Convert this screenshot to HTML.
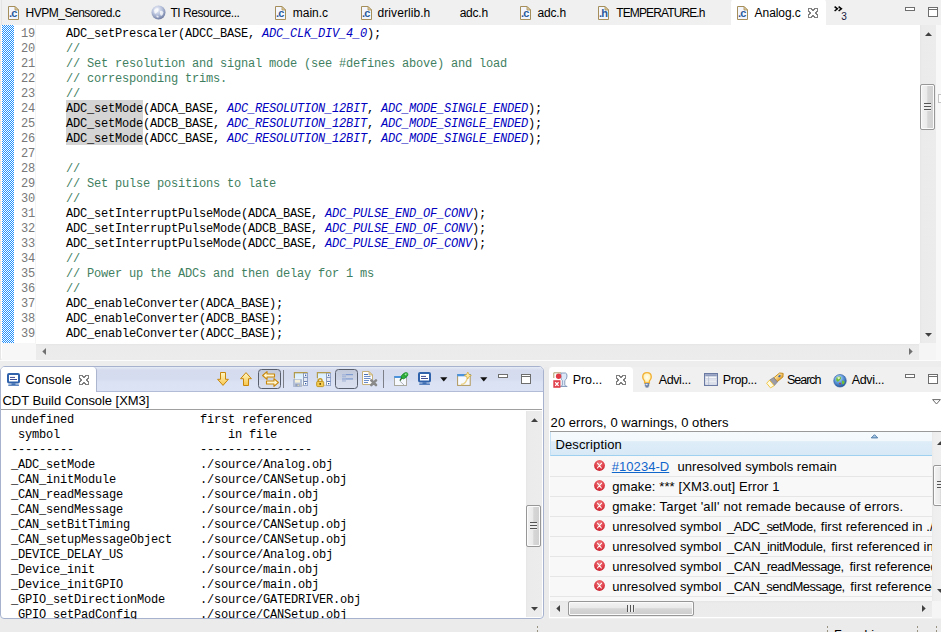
<!DOCTYPE html>
<html><head><meta charset="utf-8"><title>Analog.c</title>
<style>
*{box-sizing:border-box;margin:0;padding:0}
html,body{width:941px;height:632px;overflow:hidden;background:#f0f0f0}
body{position:relative;font-family:"Liberation Sans",sans-serif;font-size:12px;color:#000}
.abs,.ln,.cl,.co,.pr,.lb,.ic{position:absolute}
.ic{overflow:visible}
.lb{line-height:20px;height:20px;white-space:nowrap}
#hatch{position:absolute;left:2px;top:25px;width:12px;height:318px;
 background:repeating-conic-gradient(#fff 0% 25%,#1e90ff 0% 50%) 0 0/2px 2px}
.ln,.cl,.co{font-family:"Liberation Mono",monospace;font-size:12px;letter-spacing:-0.2px;line-height:15px;height:15px;white-space:pre}
.ln{left:21px;color:#787878}
.cl{left:66px}
.c{color:#3f7f5f}
.m{color:#0000c0;font-style:italic}
.h{}
.co{left:4px}
.pr{left:550px;height:20px;width:382px;overflow:hidden;white-space:nowrap;font-size:13px;line-height:20px}
.pr .sg{position:absolute;top:0.50px;line-height:20px;height:20px}
.lk{color:#1166cc;text-decoration:underline;text-underline-offset:1px}
.thumb{position:absolute;border:1px solid #979797;border-radius:2px;box-shadow:inset 0 0 0 1px #fbfbfb;background:linear-gradient(90deg,#f3f3f3,#eaeaea 45%,#d6d6d6 52%,#d0d0d0)}
.thumbh{position:absolute;border:1px solid #979797;border-radius:2px;box-shadow:inset 0 0 0 1px #fbfbfb;background:linear-gradient(#f3f3f3,#eaeaea 45%,#d6d6d6 52%,#cdcdcd)}
.grip{position:absolute;width:7px;height:8px;background:linear-gradient(#555 0,#555 1px,#eee 1px,#eee 3px,#555 3px,#555 4px,#eee 4px,#eee 6px,#555 6px,#555 7px,#eee 7px)}
.griph{position:absolute;width:8px;height:7px;background:linear-gradient(90deg,#555 0,#555 1px,#eee 1px,#eee 3px,#555 3px,#555 4px,#eee 4px,#eee 6px,#555 6px,#555 7px,#eee 7px)}
</style></head><body>
<!-- editor tab strip -->
<div class="abs" style="left:0;top:0;width:941px;height:25px;background:#f0f0f0"></div>
<div class="abs" style="left:1px;top:0;width:1px;height:25px;background:#e4e4e4"></div>
<div class="abs" style="left:731px;top:-1px;width:95px;height:26px;background:#fff;border-radius:4px 4px 0 0"></div>

<!-- editor body -->
<div class="abs" style="left:1px;top:25px;width:935px;height:335px;background:#fff;border-radius:0 0 0 3px"></div>
<div class="abs" style="left:936px;top:25px;width:5px;height:336px;background:#f8f8f8"></div>
<div class="abs" style="left:938px;top:94px;width:4px;height:9px;background:#fff;border:1px solid #c4c4c4"></div>
<div id="hatch"></div>
<div class="abs" style="left:35px;top:25px;width:1px;height:318px;background:#f4f4f4"></div>
<div class="abs" style="left:2px;top:343px;width:34px;height:17px;background:#f7f7f7"></div>
<div class="abs" style="left:0;top:25px;width:1px;height:335px;background:#e6e6e6"></div>
<div class="abs" style="left:36px;top:344px;width:883px;height:16px;background:linear-gradient(#e5e5e5 0,#ebebeb 2px,#ececec 100%)"></div>
<div class="abs" style="left:919px;top:343px;width:17px;height:17px;background:#f5f5f5"></div>
<div class="abs" style="left:920px;top:25px;width:16px;height:318px;background:linear-gradient(90deg,#e6e6e6 0,#ebebeb 2px,#ececec 100%)"></div>
<div class="thumb" style="left:920px;top:84px;width:15px;height:46px"></div>
<div class="grip" style="left:924px;top:103px"></div>
<div class="abs" style="left:0;top:360px;width:941px;height:1px;background:#fcfcfc"></div>
<div class="abs" style="left:0;top:361px;width:941px;height:6px;background:#ededed"></div>
<div class="abs" style="left:66px;top:100px;width:77px;height:45px;background:#d4d4d4"></div>
<div class="ln" style="top:27px">19</div><div class="cl" style="top:27px"><span class="k">ADC_setPrescaler(ADCC_BASE, </span><span class="m">ADC_CLK_DIV_4_0</span><span class="k">);</span></div>
<div class="ln" style="top:42px">20</div><div class="cl" style="top:42px"><span class="c">//</span></div>
<div class="ln" style="top:57px">21</div><div class="cl" style="top:57px"><span class="c">// Set resolution and signal mode (see #defines above) and load</span></div>
<div class="ln" style="top:72px">22</div><div class="cl" style="top:72px"><span class="c">// corresponding trims.</span></div>
<div class="ln" style="top:87px">23</div><div class="cl" style="top:87px"><span class="c">//</span></div>
<div class="ln" style="top:102px">24</div><div class="cl" style="top:102px"><span class="h">ADC_setMode</span><span class="k">(ADCA_BASE, </span><span class="m">ADC_RESOLUTION_12BIT</span><span class="k">, </span><span class="m">ADC_MODE_SINGLE_ENDED</span><span class="k">);</span></div>
<div class="ln" style="top:117px">25</div><div class="cl" style="top:117px"><span class="h">ADC_setMode</span><span class="k">(ADCB_BASE, </span><span class="m">ADC_RESOLUTION_12BIT</span><span class="k">, </span><span class="m">ADC_MODE_SINGLE_ENDED</span><span class="k">);</span></div>
<div class="ln" style="top:132px">26</div><div class="cl" style="top:132px"><span class="h">ADC_setMode</span><span class="k">(ADCC_BASE, </span><span class="m">ADC_RESOLUTION_12BIT</span><span class="k">, </span><span class="m">ADC_MODE_SINGLE_ENDED</span><span class="k">);</span></div>
<div class="ln" style="top:147px">27</div><div class="cl" style="top:147px"></div>
<div class="ln" style="top:162px">28</div><div class="cl" style="top:162px"><span class="c">//</span></div>
<div class="ln" style="top:177px">29</div><div class="cl" style="top:177px"><span class="c">// Set pulse positions to late</span></div>
<div class="ln" style="top:192px">30</div><div class="cl" style="top:192px"><span class="c">//</span></div>
<div class="ln" style="top:207px">31</div><div class="cl" style="top:207px"><span class="k">ADC_setInterruptPulseMode(ADCA_BASE, </span><span class="m">ADC_PULSE_END_OF_CONV</span><span class="k">);</span></div>
<div class="ln" style="top:222px">32</div><div class="cl" style="top:222px"><span class="k">ADC_setInterruptPulseMode(ADCB_BASE, </span><span class="m">ADC_PULSE_END_OF_CONV</span><span class="k">);</span></div>
<div class="ln" style="top:237px">33</div><div class="cl" style="top:237px"><span class="k">ADC_setInterruptPulseMode(ADCC_BASE, </span><span class="m">ADC_PULSE_END_OF_CONV</span><span class="k">);</span></div>
<div class="ln" style="top:252px">34</div><div class="cl" style="top:252px"><span class="c">//</span></div>
<div class="ln" style="top:267px">35</div><div class="cl" style="top:267px"><span class="c">// Power up the ADCs and then delay for 1 ms</span></div>
<div class="ln" style="top:282px">36</div><div class="cl" style="top:282px"><span class="c">//</span></div>
<div class="ln" style="top:297px">37</div><div class="cl" style="top:297px"><span class="k">ADC_enableConverter(ADCA_BASE);</span></div>
<div class="ln" style="top:312px">38</div><div class="cl" style="top:312px"><span class="k">ADC_enableConverter(ADCB_BASE);</span></div>
<div class="ln" style="top:327px">39</div><div class="cl" style="top:327px"><span class="k">ADC_enableConverter(ADCC_BASE);</span></div>

<!-- console panel -->
<div class="abs" style="left:0;top:366px;width:544px;height:253px;background:#fff;border:1px solid #a7b2cf;border-radius:5px 5px 4px 4px"></div>
<div class="abs" style="left:1px;top:367px;width:542px;height:25px;background:linear-gradient(#e6ebf6 0,#d6dcee 3px,#d5dcef 12px,#dae2f4 15px,#dbe3f5 100%);border-bottom:1px solid #b3bcd6;border-radius:4px 4px 0 0"></div>
<div class="abs" style="left:1px;top:367px;width:96px;height:25px;background:#fff;border-right:1px solid #adb6cf;border-radius:4px 4px 0 0"></div>
<div class="abs" style="left:1px;top:409px;width:541px;height:1px;background:#a0a0a0"></div>
<div class="co" style="top:413px"> undefined                  first referenced</div>
<div class="co" style="top:428px">  symbol                        in file</div>
<div class="co" style="top:443px"> ---------                  ----------------</div>
<div class="co" style="top:458px"> _ADC_setMode               ./source/Analog.obj</div>
<div class="co" style="top:473px"> _CAN_initModule            ./source/CANSetup.obj</div>
<div class="co" style="top:488px"> _CAN_readMessage           ./source/main.obj</div>
<div class="co" style="top:503px"> _CAN_sendMessage           ./source/main.obj</div>
<div class="co" style="top:518px"> _CAN_setBitTiming          ./source/CANSetup.obj</div>
<div class="co" style="top:533px"> _CAN_setupMessageObject    ./source/CANSetup.obj</div>
<div class="co" style="top:548px"> _DEVICE_DELAY_US           ./source/Analog.obj</div>
<div class="co" style="top:563px"> _Device_init               ./source/main.obj</div>
<div class="co" style="top:578px"> _Device_initGPIO           ./source/main.obj</div>
<div class="co" style="top:593px"> _GPIO_setDirectionMode     ./source/GATEDRIVER.obj</div>
<div class="co" style="top:608px"> _GPIO_setPadConfig         ./source/CANSetup.obj</div>
<div class="abs" style="left:526px;top:411px;width:16px;height:206px;background:linear-gradient(90deg,#e6e6e6 0,#ebebeb 2px,#ececec 100%)"></div>
<div class="thumb" style="left:526px;top:505px;width:15px;height:42px"></div>
<div class="grip" style="left:530px;top:522px"></div>
<div class="abs" style="left:0;top:619px;width:941px;height:13px;background:#ebebeb"></div>
<div class="abs" style="left:537px;top:626px;width:1px;height:6px;background:repeating-linear-gradient(#96927f 0,#96927f 2px,transparent 2px,transparent 4px)"></div>
<div class="abs" style="left:827px;top:626px;width:1px;height:6px;background:repeating-linear-gradient(#96927f 0,#96927f 2px,transparent 2px,transparent 4px)"></div>
<div class="abs" style="left:917px;top:626px;width:1px;height:6px;background:repeating-linear-gradient(#96927f 0,#96927f 2px,transparent 2px,transparent 4px)"></div>
<div class="abs" style="left:936px;top:626px;width:1px;height:6px;background:repeating-linear-gradient(#96927f 0,#96927f 2px,transparent 2px,transparent 4px)"></div>
<div class="abs" style="left:834px;top:627.5px;font-size:12.5px;line-height:15px;white-space:nowrap;letter-spacing:0.2px">Free License</div>

<div class="abs" style="left:544px;top:367px;width:5px;height:252px;background:#ebebeb"></div>
<!-- problems panel -->
<div class="abs" style="left:549px;top:367px;width:392px;height:251px;background:#fff"></div>
<div class="abs" style="left:549px;top:367px;width:392px;height:25px;background:#f0f0f0"></div>
<div class="abs" style="left:549px;top:367px;width:84px;height:25px;background:#fff;border-radius:4px 4px 0 0"></div>
<div class="abs" style="left:550px;top:431px;width:391px;height:1px;background:#9a9a9a"></div>
<div class="abs" style="left:550px;top:432px;width:382px;height:24px;background:linear-gradient(#f6fafd 0,#f2f8fc 38%,#deedf8 42%,#d8e9f6 100%);border-left:1px solid #c3e0f5;border-bottom:1px solid #a0d0f0"></div>
<div class="abs" style="left:550px;top:456px;width:382px;height:145px;background:#f8f8f8"></div>
<div class="pr" style="top:456px"><svg class="ic" style="left:44px;top:4px" width="11" height="11" viewBox="0 0 11 11" ><defs><radialGradient id="eg" cx="0.5" cy="0.3" r="0.8"><stop offset="0" stop-color="#f07a7e"/><stop offset="0.6" stop-color="#dc3a44"/><stop offset="1" stop-color="#c01e2c"/></radialGradient></defs><circle cx="5.5" cy="5.5" r="5.4" fill="url(#eg)"/><path d="M3.5 3.2L7.3 8M7.6 3.2L3.4 8" stroke="#fff" stroke-width="1.05" stroke-linecap="round"/></svg><span class="sg lk" style="left:61.80px;letter-spacing:0.042px">#10234-D</span><span class="sg " style="left:127.50px;letter-spacing:0.046px">unresolved symbols remain</span></div>
<div class="pr" style="top:476px"><svg class="ic" style="left:44px;top:4px" width="11" height="11" viewBox="0 0 11 11" ><defs><radialGradient id="eg" cx="0.5" cy="0.3" r="0.8"><stop offset="0" stop-color="#f07a7e"/><stop offset="0.6" stop-color="#dc3a44"/><stop offset="1" stop-color="#c01e2c"/></radialGradient></defs><circle cx="5.5" cy="5.5" r="5.4" fill="url(#eg)"/><path d="M3.5 3.2L7.3 8M7.6 3.2L3.4 8" stroke="#fff" stroke-width="1.05" stroke-linecap="round"/></svg><span class="sg " style="left:62.20px;letter-spacing:0.119px">gmake: *** [XM3.out] Error 1</span></div>
<div class="pr" style="top:496px"><svg class="ic" style="left:44px;top:4px" width="11" height="11" viewBox="0 0 11 11" ><defs><radialGradient id="eg" cx="0.5" cy="0.3" r="0.8"><stop offset="0" stop-color="#f07a7e"/><stop offset="0.6" stop-color="#dc3a44"/><stop offset="1" stop-color="#c01e2c"/></radialGradient></defs><circle cx="5.5" cy="5.5" r="5.4" fill="url(#eg)"/><path d="M3.5 3.2L7.3 8M7.6 3.2L3.4 8" stroke="#fff" stroke-width="1.05" stroke-linecap="round"/></svg><span class="sg " style="left:62.20px;letter-spacing:0.196px">gmake: Target 'all' not remade because of errors.</span></div>
<div class="pr" style="top:516px"><svg class="ic" style="left:44px;top:4px" width="11" height="11" viewBox="0 0 11 11" ><defs><radialGradient id="eg" cx="0.5" cy="0.3" r="0.8"><stop offset="0" stop-color="#f07a7e"/><stop offset="0.6" stop-color="#dc3a44"/><stop offset="1" stop-color="#c01e2c"/></radialGradient></defs><circle cx="5.5" cy="5.5" r="5.4" fill="url(#eg)"/><path d="M3.5 3.2L7.3 8M7.6 3.2L3.4 8" stroke="#fff" stroke-width="1.05" stroke-linecap="round"/></svg><span class="sg " style="left:62.20px;letter-spacing:0.044px">unresolved symbol</span><span class="sg " style="left:177.00px;letter-spacing:-0.506px">_ADC_setMode,</span><span class="sg " style="left:270.70px;letter-spacing:0.078px">first referenced in ./source/Analog.obj</span></div>
<div class="pr" style="top:536px"><svg class="ic" style="left:44px;top:4px" width="11" height="11" viewBox="0 0 11 11" ><defs><radialGradient id="eg" cx="0.5" cy="0.3" r="0.8"><stop offset="0" stop-color="#f07a7e"/><stop offset="0.6" stop-color="#dc3a44"/><stop offset="1" stop-color="#c01e2c"/></radialGradient></defs><circle cx="5.5" cy="5.5" r="5.4" fill="url(#eg)"/><path d="M3.5 3.2L7.3 8M7.6 3.2L3.4 8" stroke="#fff" stroke-width="1.05" stroke-linecap="round"/></svg><span class="sg " style="left:62.20px;letter-spacing:0.044px">unresolved symbol</span><span class="sg " style="left:177.00px;letter-spacing:-0.378px">_CAN_initModule,</span><span class="sg " style="left:281.20px;letter-spacing:0.115px">first referenced in ./source/CANSetup.obj</span></div>
<div class="pr" style="top:556px"><svg class="ic" style="left:44px;top:4px" width="11" height="11" viewBox="0 0 11 11" ><defs><radialGradient id="eg" cx="0.5" cy="0.3" r="0.8"><stop offset="0" stop-color="#f07a7e"/><stop offset="0.6" stop-color="#dc3a44"/><stop offset="1" stop-color="#c01e2c"/></radialGradient></defs><circle cx="5.5" cy="5.5" r="5.4" fill="url(#eg)"/><path d="M3.5 3.2L7.3 8M7.6 3.2L3.4 8" stroke="#fff" stroke-width="1.05" stroke-linecap="round"/></svg><span class="sg " style="left:62.20px;letter-spacing:0.044px">unresolved symbol</span><span class="sg " style="left:177.00px;letter-spacing:-0.448px">_CAN_readMessage,</span><span class="sg " style="left:299.40px;letter-spacing:0.115px">first referenced in ./source/main.obj</span></div>
<div class="pr" style="top:576px"><svg class="ic" style="left:44px;top:4px" width="11" height="11" viewBox="0 0 11 11" ><defs><radialGradient id="eg" cx="0.5" cy="0.3" r="0.8"><stop offset="0" stop-color="#f07a7e"/><stop offset="0.6" stop-color="#dc3a44"/><stop offset="1" stop-color="#c01e2c"/></radialGradient></defs><circle cx="5.5" cy="5.5" r="5.4" fill="url(#eg)"/><path d="M3.5 3.2L7.3 8M7.6 3.2L3.4 8" stroke="#fff" stroke-width="1.05" stroke-linecap="round"/></svg><span class="sg " style="left:62.20px;letter-spacing:0.044px">unresolved symbol</span><span class="sg " style="left:177.00px;letter-spacing:-0.515px">_CAN_sendMessage,</span><span class="sg " style="left:300.30px;letter-spacing:0.115px">first referenced in ./source/main.obj</span></div>
<div class="abs" style="left:550px;top:476px;width:382px;height:1px;background:#e6e6e6"></div>
<div class="abs" style="left:550px;top:496px;width:382px;height:1px;background:#e6e6e6"></div>
<div class="abs" style="left:550px;top:516px;width:382px;height:1px;background:#e6e6e6"></div>
<div class="abs" style="left:550px;top:536px;width:382px;height:1px;background:#e6e6e6"></div>
<div class="abs" style="left:550px;top:556px;width:382px;height:1px;background:#e6e6e6"></div>
<div class="abs" style="left:550px;top:576px;width:382px;height:1px;background:#e6e6e6"></div>
<div class="abs" style="left:550px;top:596px;width:382px;height:1px;background:#e6e6e6"></div>
<div class="abs" style="left:932px;top:432px;width:9px;height:169px;background:linear-gradient(90deg,#e9e9e9 0,#eeeeee 2px,#f0f0f0 100%)"></div>
<div class="thumb" style="left:933px;top:465px;width:15px;height:41px"></div>
<div class="grip" style="left:937px;top:481px"></div>
<div class="abs" style="left:550px;top:601px;width:382px;height:16px;background:linear-gradient(#e5e5e5 0,#ebebeb 2px,#ececec 100%)"></div>
<div class="abs" style="left:932px;top:601px;width:9px;height:17px;background:#f5f5f5"></div>
<div class="thumbh" style="left:568px;top:601px;width:126px;height:15px"></div>
<div class="griph" style="left:627px;top:605px"></div>
<div class="lb" style="left:25.50px;top:2.84px;font-size:12px;letter-spacing:-0.482px">HVPM_Sensored.c</div>
<div class="lb" style="left:170.40px;top:2.84px;font-size:12px;letter-spacing:-0.448px">TI Resource...</div>
<div class="lb" style="left:292.80px;top:2.84px;font-size:12px;letter-spacing:-0.029px">main.c</div>
<div class="lb" style="left:377.50px;top:2.84px;font-size:12px;letter-spacing:0.075px">driverlib.h</div>
<div class="lb" style="left:459.70px;top:2.84px;font-size:12px;letter-spacing:-0.245px">adc.h</div>
<div class="lb" style="left:537.40px;top:2.84px;font-size:12px;letter-spacing:-0.145px">adc.h</div>
<div class="lb" style="left:616.20px;top:2.84px;font-size:12px;letter-spacing:-0.876px">TEMPERATURE.h</div>
<div class="lb" style="left:754.60px;top:2.84px;font-size:12px;letter-spacing:-0.071px">Analog.c</div>
<div class="lb" style="left:25.50px;top:370.07px;font-size:12.5px;letter-spacing:0.048px">Console</div>
<div class="lb" style="left:572.80px;top:370.07px;font-size:12.5px;letter-spacing:-0.100px">Pro...</div>
<div class="lb" style="left:658.70px;top:370.07px;font-size:12.5px;letter-spacing:-0.377px">Advi...</div>
<div class="lb" style="left:722.70px;top:370.07px;font-size:12.5px;letter-spacing:-0.392px">Prop...</div>
<div class="lb" style="left:787.00px;top:370.07px;font-size:12.5px;letter-spacing:-1.031px">Search</div>
<div class="lb" style="left:851.70px;top:370.07px;font-size:12.5px;letter-spacing:-0.327px">Advi...</div>
<div class="lb" style="left:2.50px;top:390.50px;font-size:13px;letter-spacing:-0.045px">CDT Build Console [XM3]</div>
<div class="lb" style="left:550.60px;top:412.50px;font-size:13px;letter-spacing:0.053px">20 errors, 0 warnings, 0 others</div>
<div class="lb" style="left:555.50px;top:434.50px;font-size:13px;letter-spacing:0.120px">Description</div>
<svg class="ic" style="left:8px;top:6px" width="11" height="14" viewBox="0 0 11 14" ><path d="M0.5 0.5H7L10.5 4V13.5H0.5Z" fill="#f3f6fc" stroke="#a68e5a"/><path d="M7 0.5V4H10.5Z" fill="#e6d2a0" stroke="#a68e5a" stroke-width="0.8"/><text x="1" y="11" font-family="Liberation Sans,sans-serif" font-weight="bold" font-size="11" fill="#2b5b9c" letter-spacing="-0.8">.c</text></svg>
<svg class="ic" style="left:150.5px;top:5px" width="15" height="15" viewBox="0 0 15 15" ><defs><radialGradient id="gg" cx="0.4" cy="0.3" r="0.75"><stop offset="0" stop-color="#f4f6fb"/><stop offset="0.5" stop-color="#b4bfda"/><stop offset="1" stop-color="#6a769c"/></radialGradient></defs><circle cx="7.5" cy="7.5" r="7" fill="url(#gg)"/><path d="M3 5Q5 2.5 7.5 3.5Q8 6 6 7.5Q4.5 9.5 3.5 8Z M9 6Q11.5 5 12.5 7.5Q12 10.5 10 11Q8.5 9 9 6Z M5.5 10.5Q7 10 8 12Q6.5 13.2 5.5 12Z" fill="#fff" opacity="0.75"/></svg>
<svg class="ic" style="left:275px;top:6px" width="11" height="14" viewBox="0 0 11 14" ><path d="M0.5 0.5H7L10.5 4V13.5H0.5Z" fill="#f3f6fc" stroke="#a68e5a"/><path d="M7 0.5V4H10.5Z" fill="#e6d2a0" stroke="#a68e5a" stroke-width="0.8"/><text x="1" y="11" font-family="Liberation Sans,sans-serif" font-weight="bold" font-size="11" fill="#2b5b9c" letter-spacing="-0.8">.c</text></svg>
<svg class="ic" style="left:360.5px;top:6px" width="11" height="14" viewBox="0 0 11 14" ><path d="M0.5 0.5H7L10.5 4V13.5H0.5Z" fill="#f3f6fc" stroke="#a68e5a"/><path d="M7 0.5V4H10.5Z" fill="#e6d2a0" stroke="#a68e5a" stroke-width="0.8"/><text x="1" y="11" font-family="Liberation Sans,sans-serif" font-weight="bold" font-size="11" fill="#2b5b9c" letter-spacing="-0.8">.c</text></svg>
<svg class="ic" style="left:520px;top:6px" width="11" height="14" viewBox="0 0 11 14" ><path d="M0.5 0.5H7L10.5 4V13.5H0.5Z" fill="#f3f6fc" stroke="#a68e5a"/><path d="M7 0.5V4H10.5Z" fill="#e6d2a0" stroke="#a68e5a" stroke-width="0.8"/><text x="1" y="11" font-family="Liberation Sans,sans-serif" font-weight="bold" font-size="11" fill="#2b5b9c" letter-spacing="-0.8">.c</text></svg>
<svg class="ic" style="left:598px;top:6px" width="11" height="14" viewBox="0 0 11 14" ><path d="M0.5 0.5H7L10.5 4V13.5H0.5Z" fill="#f3f6fc" stroke="#a68e5a"/><path d="M7 0.5V4H10.5Z" fill="#e6d2a0" stroke="#a68e5a" stroke-width="0.8"/><text x="1" y="11" font-family="Liberation Sans,sans-serif" font-weight="bold" font-size="11" fill="#2b5b9c" letter-spacing="-0.8">.h</text></svg>
<svg class="ic" style="left:737px;top:6px" width="11" height="14" viewBox="0 0 11 14" ><path d="M0.5 0.5H7L10.5 4V13.5H0.5Z" fill="#f3f6fc" stroke="#a68e5a"/><path d="M7 0.5V4H10.5Z" fill="#e6d2a0" stroke="#a68e5a" stroke-width="0.8"/><text x="1" y="11" font-family="Liberation Sans,sans-serif" font-weight="bold" font-size="11" fill="#2b5b9c" letter-spacing="-0.8">.c</text></svg>
<svg class="ic" style="left:808px;top:8px" width="10" height="10" viewBox="0 0 10 10" ><path d="M0.5 0.5H3L5 2.5L7 0.5H9.5V3L7.5 5L9.5 7V9.5H7L5 7.5L3 9.5H0.5V7L2.5 5L0.5 3Z" fill="#fff" stroke="#808080" stroke-width="1" stroke-linejoin="miter" shape-rendering="crispEdges"/></svg>
<svg class="ic" style="left:834px;top:5.5px" width="14" height="14" viewBox="0 0 14 14" ><path d="M0.6 0.6L3.4 2.8L0.6 5 M4.6 0.6L7.4 2.8L4.6 5" fill="none" stroke="#000" stroke-width="1.5"/><text x="7.2" y="13.5" font-family="Liberation Sans,sans-serif" font-size="10" fill="#15153c">3</text></svg>
<svg class="ic" style="left:905px;top:7px" width="10" height="4" viewBox="0 0 10 4" ><rect x="0.5" y="0.5" width="9" height="3" fill="#fff" stroke="#6e6e6e"/></svg>
<svg class="ic" style="left:928px;top:7px" width="10" height="10" viewBox="0 0 10 10" ><rect x="0.5" y="0.5" width="9" height="9" fill="#fff" stroke="#6e6e6e"/><rect x="0.5" y="0.5" width="9" height="2" fill="#fff" stroke="#6e6e6e"/></svg>
<svg class="ic" style="left:7px;top:373px" width="13" height="13" viewBox="0 0 13 13" ><rect x="1" y="1" width="11" height="8.6" rx="1" fill="#fff" stroke="#2f62ab" stroke-width="2"/><rect x="3" y="3.9" width="5" height="1" fill="#3b4a92"/><rect x="3" y="6" width="7" height="1" fill="#3b4a92"/><rect x="4.5" y="10.4" width="4" height="1.4" fill="#2f62ab"/><rect x="1.2" y="11.5" width="10.8" height="1.3" rx="0.5" fill="#2f62ab"/></svg>
<svg class="ic" style="left:79px;top:375px" width="10" height="10" viewBox="0 0 10 10" ><path d="M0.5 0.5H3L5 2.5L7 0.5H9.5V3L7.5 5L9.5 7V9.5H7L5 7.5L3 9.5H0.5V7L2.5 5L0.5 3Z" fill="#fff" stroke="#808080" stroke-width="1" stroke-linejoin="miter" shape-rendering="crispEdges"/></svg>
<svg class="ic" style="left:217px;top:372px" width="12" height="14" viewBox="0 0 12 14" ><defs><linearGradient id="ag" x1="0" y1="0" x2="0" y2="1"><stop offset="0" stop-color="#fff6c4"/><stop offset="1" stop-color="#f7c64e"/></linearGradient></defs><path d="M3.5 0.5H8.5V7.3H11.4L6 13.4L0.6 7.3H3.5Z" fill="url(#ag)" stroke="#c8860a" stroke-linejoin="round"/></svg>
<svg class="ic" style="left:240px;top:372px" width="12" height="14" viewBox="0 0 12 14" ><defs><linearGradient id="ag" x1="0" y1="0" x2="0" y2="1"><stop offset="0" stop-color="#fff6c4"/><stop offset="1" stop-color="#f7c64e"/></linearGradient></defs><path d="M3.5 13.5H8.5V6.7H11.4L6 0.6L0.6 6.7H3.5Z" fill="url(#ag)" stroke="#c8860a" stroke-linejoin="round"/></svg>
<div class="abs" style="left:258px;top:369px;width:23px;height:20px;border:1.5px solid #595e6c;border-radius:3.5px;background:linear-gradient(#c2c9da,#ccd3e4 55%,#d6dcec 56%,#d9dfef)"></div>
<svg class="ic" style="left:261.5px;top:371px" width="17" height="16" viewBox="0 0 17 16" ><defs><linearGradient id="ag" x1="0" y1="0" x2="0" y2="1"><stop offset="0" stop-color="#fff6c4"/><stop offset="1" stop-color="#f7c64e"/></linearGradient></defs><path d="M0.6 4.5L5 0.6V3H12.5V6H5V8.4Z" fill="#fff6d0" stroke="#c8860a" stroke-width="1.1" stroke-linejoin="round"/><path d="M16.4 11.5L12 7.6V10H4.5V13H12V15.4Z" fill="#fff6d0" stroke="#c8860a" stroke-width="1.1" stroke-linejoin="round"/></svg>
<div class="abs" style="left:283px;top:370px;width:1px;height:18px;background:#7c7f88"></div>
<svg class="ic" style="left:293px;top:372px" width="15" height="15" viewBox="0 0 15 15" ><defs><linearGradient id="wg" x1="0" y1="0" x2="0" y2="1"><stop offset="0" stop-color="#d6eefe"/><stop offset="1" stop-color="#f4f6fc"/></linearGradient></defs><rect x="1.5" y="0.8" width="9" height="12.4" fill="url(#wg)" stroke="#c9c3a4" stroke-width="0.8"/><path d="M1.4 6V0.6H14.6" fill="none" stroke="#b39b4e" stroke-width="1.2"/><rect x="10.4" y="1" width="4.4" height="12.8" fill="#6a82b6"/><rect x="11" y="1.6" width="3.2" height="3.2" fill="#fff"/><rect x="12" y="2.6" width="1.3" height="1.3" fill="#2456a6"/><rect x="11" y="5.8" width="3.2" height="3.2" fill="#e3e9f4"/><rect x="11" y="10" width="3.2" height="3.2" fill="#fff"/><rect x="12" y="11" width="1.3" height="1.3" fill="#2456a6"/><rect x="0.3" y="7.4" width="8.4" height="7.3" rx="0.6" fill="#b4c0d8" stroke="#9aa8c4" stroke-width="0.6" opacity="0.95"/><rect x="2" y="7.8" width="5" height="2.8" fill="#f6f0d8"/><rect x="2.4" y="12" width="4" height="2.5" fill="#93a0bc"/><rect x="4.6" y="12.5" width="1.2" height="1.6" fill="#e8e0b0"/></svg>
<svg class="ic" style="left:316px;top:372px" width="15" height="15" viewBox="0 0 15 15" ><defs><linearGradient id="wg" x1="0" y1="0" x2="0" y2="1"><stop offset="0" stop-color="#d6eefe"/><stop offset="1" stop-color="#f4f6fc"/></linearGradient></defs><rect x="1.5" y="0.8" width="9" height="12.4" fill="url(#wg)" stroke="#c9c3a4" stroke-width="0.8"/><path d="M1.4 6V0.6H14.6" fill="none" stroke="#b39b4e" stroke-width="1.2"/><rect x="10.4" y="1" width="4.4" height="12.8" fill="#6a82b6"/><rect x="11" y="1.6" width="3.2" height="3.2" fill="#fff"/><rect x="12" y="2.6" width="1.3" height="1.3" fill="#2456a6"/><rect x="11" y="5.8" width="3.2" height="3.2" fill="#e3e9f4"/><rect x="11" y="10" width="3.2" height="3.2" fill="#fff"/><rect x="12" y="11" width="1.3" height="1.3" fill="#2456a6"/><path d="M2.4 10V8.6Q2.4 6.8 4.2 6.8Q6 6.8 6 8.6V10" fill="none" stroke="#c79a22" stroke-width="1.4"/><rect x="0.7" y="9.4" width="7" height="5.2" rx="1" fill="#f2cc54" stroke="#c08e14" stroke-width="0.9"/><rect x="3.4" y="11" width="1.6" height="1.8" fill="#6b4c08"/></svg>
<div class="abs" style="left:335px;top:369px;width:23px;height:20px;border:1.5px solid #595e6c;border-radius:3.5px;background:linear-gradient(#c2c9da,#ccd3e4 55%,#d6dcec 56%,#d9dfef)"></div>
<svg class="ic" style="left:342px;top:373.5px" width="11" height="8" viewBox="0 0 11 8" ><rect x="0" y="0" width="11" height="1.2" fill="#7f9bd0"/><rect x="0" y="0" width="4" height="1.2" fill="#a9b9dc"/><rect x="0" y="2.2" width="4" height="1.1" fill="#a3b3d6"/><rect x="0" y="4.3" width="11" height="1.2" fill="#7f9bd0"/><rect x="0" y="4.3" width="4" height="1.2" fill="#a9b9dc"/><rect x="0" y="6.4" width="4" height="1.1" fill="#a3b3d6"/></svg>
<svg class="ic" style="left:362px;top:371px" width="15.5" height="15.5" viewBox="0 0 15.5 15.5" ><path d="M0.5 0.5H7L10.5 4V13.5H0.5Z" fill="#fdfdfd" stroke="#c4b07c"/><path d="M7 0.5V4H10.5Z" fill="#ecd9a0" stroke="#c4b07c" stroke-width="0.8"/><rect x="2" y="3" width="4" height="1" fill="#4a70b8"/><rect x="2" y="5" width="6.5" height="1" fill="#6a8cc8"/><rect x="2" y="7" width="6.5" height="1" fill="#6a8cc8"/><rect x="2" y="9" width="5" height="1" fill="#6a8cc8"/><rect x="2" y="11" width="4" height="1" fill="#6a8cc8"/><path d="M9.3 9.3L14 14M14 9.3L9.3 14" stroke="#8a8a8a" stroke-width="2.6" stroke-linecap="round"/></svg>
<div class="abs" style="left:383px;top:370px;width:1px;height:18px;background:#7c7f88"></div>
<svg class="ic" style="left:393.5px;top:372px" width="15" height="14" viewBox="0 0 15 14" ><rect x="0.5" y="4.5" width="12" height="9" fill="#f6f9fe" stroke="#a9a9a0"/><rect x="0.3" y="4" width="12.4" height="2" fill="#4a92dc"/><path d="M5.8 9L10 13" stroke="#9aa0a8" stroke-width="0.8"/><path d="M6 8.6L8.2 5.2" stroke="#2c6e2a" stroke-width="1.4"/><ellipse cx="10.2" cy="4" rx="3.3" ry="2.3" transform="rotate(-40 10.2 4)" fill="#2fae3c" stroke="#1c8a2a" stroke-width="0.7"/><circle cx="12" cy="2.4" r="2" fill="#35b844" stroke="#1c8a2a" stroke-width="0.6"/><ellipse cx="11.6" cy="2.4" rx="1.1" ry="0.7" transform="rotate(-40 11.6 2.4)" fill="#9be89e"/></svg>
<svg class="ic" style="left:418px;top:372px" width="13" height="13" viewBox="0 0 13 13" ><rect x="1" y="1" width="11" height="8.6" rx="1" fill="#fff" stroke="#2f62ab" stroke-width="2"/><rect x="3" y="3.9" width="5" height="1" fill="#3b4a92"/><rect x="3" y="6" width="7" height="1" fill="#3b4a92"/><rect x="4.5" y="10.4" width="4" height="1.4" fill="#2f62ab"/><rect x="1.2" y="11.5" width="10.8" height="1.3" rx="0.5" fill="#2f62ab"/></svg>
<svg class="ic" style="left:440px;top:376.7px" width="8" height="5" viewBox="0 0 8 5" ><path d="M0.2 0.3H7.4L3.8 4.4Z" fill="#111"/></svg>
<svg class="ic" style="left:457px;top:372px" width="15" height="14" viewBox="0 0 15 14" ><rect x="0.6" y="2.6" width="12.6" height="10.8" fill="#f7faff" stroke="#b0985c" stroke-width="1"/><rect x="0.2" y="2" width="13.4" height="2.3" fill="#4a92dc"/><path d="M4 12.5Q9.5 12 10.5 5" fill="none" stroke="#e9d28a" stroke-width="1.6"/><path d="M10.8 0L12 2.4L14.4 3.4L12 4.6L10.8 7L9.6 4.6L7.2 3.4L9.6 2.4Z" fill="#ffe9a0" stroke="#d9a930" stroke-width="0.7"/></svg>
<svg class="ic" style="left:480px;top:376.7px" width="8" height="5" viewBox="0 0 8 5" ><path d="M0.2 0.3H7.4L3.8 4.4Z" fill="#111"/></svg>
<svg class="ic" style="left:498px;top:374px" width="10" height="4" viewBox="0 0 10 4" ><rect x="0.5" y="0.5" width="9" height="3" fill="#fff" stroke="#6e6e6e"/></svg>
<svg class="ic" style="left:521px;top:374px" width="10" height="10" viewBox="0 0 10 10" ><rect x="0.5" y="0.5" width="9" height="9" fill="#fff" stroke="#6e6e6e"/><rect x="0.5" y="0.5" width="9" height="2" fill="#fff" stroke="#6e6e6e"/></svg>
<svg class="ic" style="left:553px;top:372px" width="15" height="16" viewBox="0 0 15 16" ><path d="M0.8 6V0.8H8" fill="none" stroke="#b0a070" stroke-width="1"/><path d="M8 1H12.5Q14 1.2 14 4Q14 7.5 11.8 8.5V13Q12 14 14.2 14.5H7.2Q9.2 14 9.3 13V8.5Q7.5 7.5 8 1Z" fill="#dce8f7" stroke="#7f93b5" stroke-width="0.9"/><circle cx="5.6" cy="4.2" r="2.7" fill="#e23a44"/><rect x="0.3" y="8.2" width="7.2" height="7.6" fill="#e0404c"/><path d="M2.2 10.3L5.6 13.9M5.6 10.3L2.2 13.9" stroke="#fff" stroke-width="1.3"/></svg>
<svg class="ic" style="left:616px;top:375px" width="10" height="10" viewBox="0 0 10 10" ><path d="M0.5 0.5H3L5 2.5L7 0.5H9.5V3L7.5 5L9.5 7V9.5H7L5 7.5L3 9.5H0.5V7L2.5 5L0.5 3Z" fill="#fff" stroke="#808080" stroke-width="1" stroke-linejoin="miter" shape-rendering="crispEdges"/></svg>
<svg class="ic" style="left:641.5px;top:372px" width="10" height="16" viewBox="0 0 10 16" ><defs><radialGradient id="bg" cx="0.5" cy="0.45" r="0.6"><stop offset="0" stop-color="#fffef4"/><stop offset="0.6" stop-color="#fff3bf"/><stop offset="1" stop-color="#fbd066"/></radialGradient></defs><path d="M5 0.7Q9.3 0.7 9.3 5Q9.3 7.2 7.4 9V11H2.6V9Q0.7 7.2 0.7 5Q0.7 0.7 5 0.7Z" fill="url(#bg)" stroke="#f2b134" stroke-width="1.3"/><rect x="2.8" y="11" width="4.4" height="3.4" fill="#6c81a6"/><rect x="3.6" y="11.8" width="2" height="1.4" fill="#e4ebf6"/><rect x="3.6" y="14.2" width="2.8" height="1.3" fill="#5a6e94"/></svg>
<svg class="ic" style="left:704px;top:373px" width="14" height="13" viewBox="0 0 14 13" ><rect x="0.6" y="0.6" width="12.8" height="11.8" fill="#fbfcfe" stroke="#6a7aa2" stroke-width="1.2"/><rect x="1.2" y="1.2" width="11.6" height="2" fill="#8e9bbd"/><rect x="1.2" y="5.4" width="11.6" height="1.8" fill="#e6eaf3"/><rect x="1.2" y="9" width="11.6" height="1.8" fill="#e6eaf3"/><path d="M1 3.6H13M1 5.4H13M1 7.2H13M1 9H13M1 10.8H13" stroke="#c3cad9" stroke-width="0.6"/><path d="M4.6 3.2V12" stroke="#b4bccf" stroke-width="0.8"/></svg>
<svg class="ic" style="left:767px;top:372px" width="17" height="16" viewBox="0 0 17 16" ><defs><linearGradient id="sg" x1="0" y1="0" x2="0" y2="1"><stop offset="0" stop-color="#ffe9a6"/><stop offset="1" stop-color="#e3a030"/></linearGradient></defs><g transform="translate(1.6,13.6) rotate(-40)"><path d="M9 -2.6H16.5L19 0L16.5 2.6H9Z" fill="url(#sg)" stroke="#c48a1c" stroke-width="0.9"/><rect x="13.2" y="-1" width="2.4" height="1.6" fill="#3c62ae"/><path d="M4.2 -3.6L9 -2.9V2.9L4.2 3.6Z" fill="#9c9ca6" stroke="#7c7c86" stroke-width="0.7"/><path d="M4.2 -3.6L0 -3V3L4.2 3.6Z" fill="#fffbe0" stroke="#f0c446" stroke-width="0.9"/></g></svg>
<svg class="ic" style="left:833px;top:373.5px" width="14" height="14" viewBox="0 0 14 14" ><defs><radialGradient id="gc" cx="0.4" cy="0.3" r="0.75"><stop offset="0" stop-color="#cfe6ff"/><stop offset="0.5" stop-color="#5a95d8"/><stop offset="1" stop-color="#1f4f96"/></radialGradient></defs><circle cx="7" cy="6.8" r="6.3" fill="url(#gc)" stroke="#2c5a9c" stroke-width="0.6"/><path d="M3.5 3.5Q6 1.8 8 3Q8.5 5.5 6.5 6.5Q5 8.5 3.5 7Q2.8 5 3.5 3.5Z M9 6.5Q11 6 11.8 8Q11 10.5 9.5 10.5Q8.5 8.5 9 6.5Z" fill="#6fbf3a"/><path d="M4 3.5Q6 2.6 7.4 3.6Q6.8 5.4 5.4 5.4Z" fill="#f2f6d0" opacity="0.9"/><circle cx="7" cy="9.6" r="0.8" fill="#d03020"/></svg>
<svg class="ic" style="left:905px;top:374px" width="10" height="4" viewBox="0 0 10 4" ><rect x="0.5" y="0.5" width="9" height="3" fill="#fff" stroke="#6e6e6e"/></svg>
<svg class="ic" style="left:928px;top:374px" width="10" height="10" viewBox="0 0 10 10" ><rect x="0.5" y="0.5" width="9" height="9" fill="#fff" stroke="#6e6e6e"/><rect x="0.5" y="0.5" width="9" height="2" fill="#fff" stroke="#6e6e6e"/></svg>
<svg class="ic" style="left:932px;top:399px" width="9" height="6" viewBox="0 0 9 6" ><path d="M0.6 0.6H8.4L4.5 5Z" fill="#fff" stroke="#6a6a6a" stroke-width="1"/></svg>
<svg class="ic" style="left:924.5px;top:32px" width="7" height="4" viewBox="0 0 7 4" ><path d="M0 4L3.5 0.3L7 4Z" fill="#404040"/></svg>
<svg class="ic" style="left:924.5px;top:333px" width="7" height="4" viewBox="0 0 7 4" ><path d="M0 0L3.5 3.7L7 0Z" fill="#404040"/></svg>
<svg class="ic" style="left:42px;top:348px" width="4" height="7" viewBox="0 0 4 7" ><path d="M4 0L0.3 3.5L4 7Z" fill="#707070"/></svg>
<svg class="ic" style="left:909px;top:348px" width="4" height="7" viewBox="0 0 4 7" ><path d="M0 0L3.7 3.5L0 7Z" fill="#707070"/></svg>
<svg class="ic" style="left:531px;top:418px" width="7" height="4" viewBox="0 0 7 4" ><path d="M0 4L3.5 0.3L7 4Z" fill="#404040"/></svg>
<svg class="ic" style="left:531px;top:607px" width="7" height="4" viewBox="0 0 7 4" ><path d="M0 0L3.5 3.7L7 0Z" fill="#404040"/></svg>
<svg class="ic" style="left:556px;top:605px" width="4" height="7" viewBox="0 0 4 7" ><path d="M4 0L0.3 3.5L4 7Z" fill="#404040"/></svg>
<svg class="ic" style="left:922px;top:605px" width="4" height="7" viewBox="0 0 4 7" ><path d="M0 0L3.7 3.5L0 7Z" fill="#404040"/></svg>
<svg class="ic" style="left:937px;top:441px" width="7" height="4" viewBox="0 0 7 4" ><path d="M0 4L3.5 0.3L7 4Z" fill="#404040"/></svg>
<svg class="ic" style="left:937px;top:589px" width="7" height="4" viewBox="0 0 7 4" ><path d="M0 0L3.5 3.7L7 0Z" fill="#404040"/></svg>
<svg class="ic" style="left:871px;top:434px" width="7" height="4" viewBox="0 0 7 4" ><path d="M0.3 3.9L3.5 0.7L6.7 3.9Z" fill="#a9cbe6" stroke="#3f6f9f" stroke-width="0.9"/></svg>
</body></html>
